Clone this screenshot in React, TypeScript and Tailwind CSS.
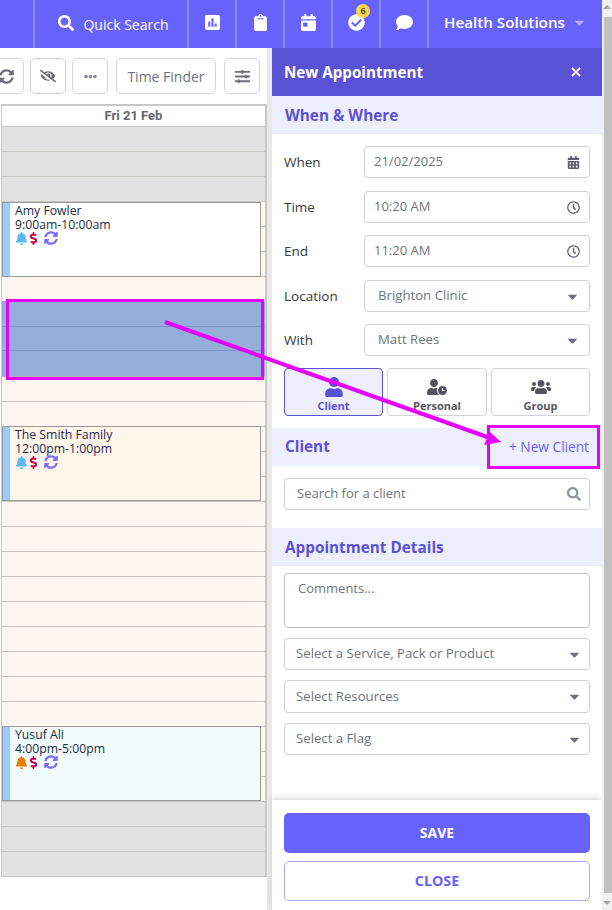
import {
  FaBell,
  FaCalendarAlt,
  FaCalendarDay,
  FaCaretDown,
  FaCheckCircle,
  FaClipboard,
  FaComment,
  FaDollarSign,
  FaEllipsisH,
  FaEyeSlash,
  FaPoll,
  FaRegClock,
  FaSearch,
  FaSlidersH,
  FaSyncAlt,
  FaUser,
  FaUserClock,
  FaUsers,
} from "react-icons/fa";
import type { ReactNode } from "react";

const rows = Array.from({ length: 30 }, (_, index) => index);

const events = [
  { name: "Amy Fowler", time: "9:00am-10:00am", top: "top-[96px]", bg: "bg-white", bell: "text-[#5cb8f5]" },
  { name: "The Smith Family", time: "12:00pm-1:00pm", top: "top-[320px]", bg: "bg-[#fff5eb]", bell: "text-[#5cb8f5]" },
  { name: "Yusuf Ali", time: "4:00pm-5:00pm", top: "top-[620px]", bg: "bg-[#f1fbfb]", bell: "text-[#e67e00]" },
];

function HeaderCell({ children, badge }: { children: ReactNode; badge?: string }) {
  return (
    <div className="relative flex h-12 w-[48px] items-center justify-center border-r-2 border-[#8b88fc] pb-[3px] text-[17px] text-white">
      {children}
      {badge ? (
        <span className="absolute left-[23px] top-[4px] flex h-[14px] w-[14px] items-center justify-center rounded-full bg-[#f7d749] text-[9px] font-semibold text-[#333]">
          {badge}
        </span>
      ) : null}
    </div>
  );
}

function ToolButton({ children, className }: { children: ReactNode; className: string }) {
  return (
    <div className={`flex h-9 shrink-0 items-center justify-center rounded-[5px] border border-[#d4d4d4] bg-white text-[#6c6c78] ${className}`}>
      {children}
    </div>
  );
}

function SectionTitle({ title, action }: { title: string; action?: string }) {
  return (
    <div className="flex h-[38px] items-center justify-between bg-[#eeeffd] pl-[13px] pr-[13px]">
      <span className={`text-[15.3px] font-bold text-[#5a52d5] ${action ? "mb-[2px]" : ""}`}>{title}</span>
      {action ? <span className="text-[13.7px] font-medium text-[#6762fb]">{action}</span> : null}
    </div>
  );
}

function Field({ label, value, icon, select, className }: { label: string; value: string; icon?: ReactNode; select?: boolean; className: string }) {
  return (
    <div className={`flex h-8 items-center pl-3 pr-3 ${className}`}>
      <span className="w-20 text-[13.5px] font-medium text-[#343a40]">{label}</span>
      <div className={`flex h-8 flex-1 items-center justify-between rounded-[4px] border border-[#ced0d4] pr-[9px] text-[#6c757d] ${select ? "pl-[13px] text-[13.2px]" : "pl-[9px] text-[13px]"}`}>
        <span>{value}</span>
        {select ? <FaCaretDown className="text-[15px] text-[#6c6f7c]" /> : icon}
      </div>
    </div>
  );
}

function SelectBox({ text, className }: { text: string; className: string }) {
  return (
    <div className={`mx-3 flex items-center justify-between rounded-[4px] border border-[#ced0d4] pl-[11px] pr-[7px] text-[13.2px] text-[#6c757d] ${className}`}>
      <span>{text}</span>
      <FaCaretDown className="text-[15px] text-[#6c7280]" />
    </div>
  );
}

function TypeTab({ label, icon, active, className }: { label: string; icon: ReactNode; active?: boolean; className: string }) {
  return (
    <div
      className={`flex h-12 flex-col items-center justify-end rounded-[4px] border pb-[2px] text-[11px] font-bold ${className} ${
        active ? "border-[#5a52d5] bg-[#eeeffd] text-[#5a52d5]" : "border-[#d4d4d8] bg-white text-[#55555f]"
      }`}
    >
      <span className="text-[20px] leading-[20px]">{icon}</span>
      <span className="mt-[2px] leading-[14px]">{label}</span>
    </div>
  );
}

function Calendar() {
  return (
    <div className="relative ml-px w-[266px] border-y-2 border-l border-r-2 border-[#c8c8c8] border-b-0">
      <div className="flex h-[20px] items-center justify-center font-['Roboto',sans-serif] text-[13px] font-bold text-[#66666e]">
        Fri 21 Feb
      </div>
      <div className="border-t border-[#c8c8c8]">
        {rows.map((row) => (
          <div
            key={row}
            className={`h-[25px] border-b border-[#c9c6c2] ${row < 3 || row > 26 ? "bg-[#e2e2e2]" : "bg-[#fff6f2]"}`}
          />
        ))}
      </div>
      {events.map((event) => (
        <div
          key={event.name}
          className={`absolute left-0 flex h-[75px] w-[259px] border border-[#9a9a9a] ${event.top} ${event.bg}`}
        >
          <div className="w-[7px] bg-[#99ccff]" />
          <div className="pl-[5px] font-['Open_Sans',sans-serif] text-[12.25px] leading-[14px] text-[#1c2b4a]">
            <div className="pt-[1px]">{event.name}</div>
            <div>{event.time}</div>
            <div className="-mt-px flex items-center text-[13px]">
              <FaBell className={event.bell} />
              <FaDollarSign className="-ml-px text-[#c8004f]" />
              <FaSyncAlt className="ml-[4px] text-[14px] text-[#7a6cfb]" />
            </div>
          </div>
        </div>
      ))}
      <div className="absolute left-0 top-[195px] flex h-[76px] w-full flex-col border-b border-[#b5b5b5] bg-[#95aed9]">
        <div className="mt-[25px] h-[25px] border-y border-[#7f97c9]" />
      </div>
    </div>
  );
}

export default function App() {
  return (
    <div className="relative flex h-[910px] w-[612px] overflow-hidden bg-white font-['Open_Sans',sans-serif]">
      <div className="flex w-[602px] flex-col">
        <header className="flex h-12 shrink-0 bg-[#6762fb]">
          <div className="h-12 w-[35px] border-r-2 border-[#8b88fc]" />
          <div className="flex h-12 w-[154px] items-center justify-center gap-[9px] border-r-2 border-[#8b88fc] pl-[5px] text-[14px] text-white">
            <FaSearch className="mb-[3px] text-[16px]" />
            <span>Quick Search</span>
          </div>
          <HeaderCell><FaPoll /></HeaderCell>
          <HeaderCell><FaClipboard /></HeaderCell>
          <HeaderCell><FaCalendarDay /></HeaderCell>
          <HeaderCell badge="6"><FaCheckCircle /></HeaderCell>
          <HeaderCell><FaComment /></HeaderCell>
          <div className="flex h-12 flex-1 items-center justify-center gap-[7px] pb-[3px] text-[15.2px] font-semibold text-white">
            <span>Health Solutions</span>
            <FaCaretDown className="text-[15px] text-[#b3b1fd]" />
          </div>
        </header>

        <div className="flex flex-1">
          <div className="flex w-[272px]">
            <div className="w-[267px] shrink-0 overflow-hidden">
              <div className="flex h-14 items-center justify-end gap-[6px] pr-[7px]">
                <ToolButton className="w-9 text-[15px]"><FaSyncAlt /></ToolButton>
                <ToolButton className="w-9 text-[16px]"><FaEyeSlash /></ToolButton>
                <ToolButton className="w-9 text-[13px] text-[#8a8a94]"><FaEllipsisH /></ToolButton>
                <ToolButton className="ml-[2px] w-[100px] text-[14px] text-[#6c757d]">Time Finder</ToolButton>
                <ToolButton className="ml-[2px] w-9 text-[15px]"><FaSlidersH /></ToolButton>
              </div>
              <Calendar />
            </div>
            <div className="w-[5px] bg-[#e9e9e9]" />
          </div>

          <aside className="flex w-[330px] flex-col">
            <div className="flex h-12 shrink-0 items-center justify-between bg-[#5a52d5] pl-3 pr-[21px] text-white">
              <span className="text-[15.2px] font-bold">New Appointment</span>
              <svg width="10" height="10" viewBox="0 0 10 10">
                <path d="M1 1 9 9M9 1 1 9" stroke="currentColor" strokeWidth="1.8" />
              </svg>
            </div>
            <SectionTitle title="When & Where" />
            <Field className="mt-3" label="When" value="21/02/2025" icon={<FaCalendarAlt className="text-[13px] text-[#5c5c6e]" />} />
            <Field className="mt-[13px]" label="Time" value="10:20 AM" icon={<FaRegClock className="text-[13px] text-[#5c5c6e]" />} />
            <Field className="mt-3" label="End" value="11:20 AM" icon={<FaRegClock className="text-[13px] text-[#5c5c6e]" />} />
            <Field className="mt-[13px]" label="Location" value="Brighton Clinic" select />
            <Field className="mt-3" label="With" value="Matt Rees" select />
            <div className="mx-3 mt-3 flex gap-1">
              <TypeTab className="w-[99px]" label="Client" icon={<FaUser />} active />
              <TypeTab className="w-[100px]" label="Personal" icon={<FaUserClock />} />
              <TypeTab className="w-[99px]" label="Group" icon={<FaUsers />} />
            </div>
            <div className="mt-3">
              <SectionTitle title="Client" action="+ New Client" />
            </div>
            <div className="mx-3 mt-3 flex h-8 items-center justify-between rounded-[4px] border border-[#ced0d4] pl-3 pr-2 text-[13px] text-[#6c757d]">
              <span>Search for a client</span>
              <FaSearch className="text-[14px] text-[#8a93a0]" />
            </div>
            <div className="mt-[18px]">
              <SectionTitle title="Appointment Details" />
            </div>
            <div className="mx-3 mt-[7px] h-[55px] rounded-[4px] border border-[#bfc1c5] px-[13px] py-[5px] text-[13px] text-[#6c757d]">
              Comments...
            </div>
            <SelectBox className="mt-[10px] h-8" text="Select a Service, Pack or Product" />
            <SelectBox className="mt-[10px] h-[33px]" text="Select Resources" />
            <SelectBox className="mt-[10px] h-8" text="Select a Flag" />
            <div className="mt-auto flex h-[110px] flex-col gap-2 px-3 pt-[13px] shadow-[0_-3px_6px_rgba(0,0,0,0.12)]">
              <div className="flex h-10 items-center justify-center rounded-[5px] bg-[#6762fb] pb-[2px] text-[14px] font-bold text-white">SAVE</div>
              <div className="flex h-10 items-center justify-center rounded-[5px] border border-[#a9a6fd] text-[14.3px] font-bold text-[#6762fb]">CLOSE</div>
            </div>
          </aside>
        </div>
      </div>

      <div className="flex w-[10px] flex-col justify-between bg-[#f1f1f1]">
        <div className="mx-auto mt-[5px] h-0 w-0 border-x-[4px] border-b-[4px] border-x-transparent border-b-[#a3a3a3]" />
        <div className="ml-[2px] h-[876px] w-2 bg-[#c1c1c1]" />
        <div className="mx-auto mb-[5px] h-0 w-0 border-x-[4px] border-t-[4px] border-x-transparent border-t-[#a3a3a3]" />
      </div>

      {/* annotation drawn over the screenshot */}
      <div className="pointer-events-none absolute left-[6px] top-[299px] h-[81px] w-[258px] border-[3px] border-[#e600ff]" />
      <div className="pointer-events-none absolute left-[487px] top-[425px] h-[44px] w-[113px] border-[3px] border-[#e600ff]" />
      <svg className="pointer-events-none absolute left-0 top-0" width="612" height="910" viewBox="0 0 612 910">
        <line x1="165" y1="322" x2="490" y2="438" stroke="#e600ff" strokeWidth="4" />
        <polygon points="501,442 490,432 484,445" fill="#e600ff" />
      </svg>
    </div>
  );
}
